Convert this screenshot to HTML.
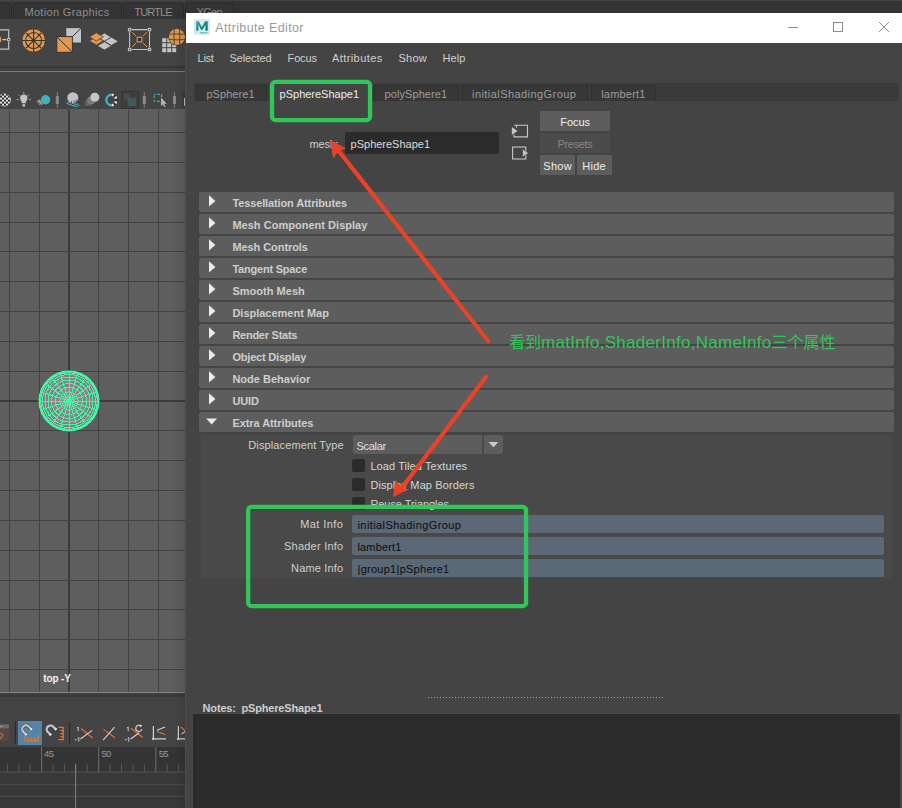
<!DOCTYPE html>
<html lang="zh"><head><meta charset="utf-8"><title>Attribute Editor</title>
<style>
html,body{margin:0;padding:0}
body{width:902px;height:808px;overflow:hidden;background:#444444;position:relative;font-family:"Liberation Sans", "Noto Sans CJK SC", sans-serif;}
.abs,.t,.box{position:absolute}
.t{white-space:pre;line-height:20px;height:20px;display:block}
svg{position:absolute;left:0;top:0;overflow:visible}
#maya{left:0;top:0;width:186px;height:808px;overflow:hidden;background:#444444}
#ae{left:186px;top:13px;width:716px;height:795px;background:#444444;overflow:hidden}
.sec{position:absolute;left:13px;width:695px;height:20px;background:#5d5d5d;border-radius:2px}
.btn{position:absolute;background:#5d5d5d;border-radius:1px}
.fld{position:absolute;left:166px;width:532px;height:18px;background:#5b6876;border-radius:2px}
.chk{position:absolute;left:166px;width:13px;height:13px;background:#2b2b2b;border-radius:2px}
.tab{position:absolute;top:72px;height:16px;background:#373737;border:1px solid #303030;border-bottom:none;box-sizing:border-box;border-radius:2px 2px 0 0}
</style></head><body>

<div id="maya" class="abs">
<div class="box" style="left:0;top:0;width:186px;height:19px;background:#3a3a3a"></div>
<div class="box" style="left:0;top:0;width:186px;height:1px;background:#464646"></div>
<div class="box" style="left:-20px;top:3px;width:32px;height:16px;background:#343434;border:1px solid #2b2b2b;border-bottom:none;box-sizing:border-box;border-radius:3px 3px 0 0"></div>
<div class="box" style="left:13px;top:3px;width:108.6px;height:16px;background:#343434;border:1px solid #2b2b2b;border-bottom:none;box-sizing:border-box;border-radius:3px 3px 0 0"></div>
<div class="box" style="left:122.8px;top:3px;width:61.2px;height:16px;background:#343434;border:1px solid #2b2b2b;border-bottom:none;box-sizing:border-box;border-radius:3px 3px 0 0"></div>
<div class="box" style="left:185.4px;top:3px;width:54.599999999999994px;height:16px;background:#343434;border:1px solid #2b2b2b;border-bottom:none;box-sizing:border-box;border-radius:3px 3px 0 0"></div>
<div class="box" style="left:0;top:19px;width:186px;height:47px;background:#444444"></div>
<div class="box" style="left:0;top:66px;width:186px;height:2px;background:#373737"></div>
<div class="box" style="left:0;top:68px;width:186px;height:3px;background:#414141"></div>
<div class="box" style="left:0;top:71px;width:186px;height:1.1px;background:#7c7c7c"></div>
<div class="box" style="left:0;top:109.4px;width:185.3px;height:582.4px;background:#5e5e5e"></div>
<div class="box" style="left:0;top:691.8px;width:185.3px;height:1.7px;background:#808080"></div>
<div class="box" style="left:0;top:693.5px;width:185.3px;height:3px;background:#3b3b3b"></div>
<div class="box" style="left:0;top:746.8px;width:185.2px;height:25.7px;background:#343434"></div>
<div class="box" style="left:0;top:772.5px;width:185.2px;height:36px;background:#383838"></div>
<div class="box" style="left:18px;top:720.8px;width:24.1px;height:24.2px;background:#5285a6"></div>
<svg width="186" height="808" viewBox="0 0 186 808">
<rect x="-21" y="109.5" width="1" height="582.3" fill="#424242"/>
<rect x="9" y="109.5" width="1" height="582.3" fill="#424242"/>
<rect x="39" y="109.5" width="1" height="582.3" fill="#424242"/>
<rect x="68" y="109.5" width="2" height="582.3" fill="#3c3c3c"/>
<rect x="98" y="109.5" width="1" height="582.3" fill="#424242"/>
<rect x="128" y="109.5" width="1" height="582.3" fill="#424242"/>
<rect x="158" y="109.5" width="1" height="582.3" fill="#424242"/>
<rect x="0" y="132" width="185.3" height="1" fill="#424242"/>
<rect x="0" y="162" width="185.3" height="1" fill="#424242"/>
<rect x="0" y="192" width="185.3" height="1" fill="#424242"/>
<rect x="0" y="222" width="185.3" height="1" fill="#424242"/>
<rect x="0" y="251" width="185.3" height="1" fill="#424242"/>
<rect x="0" y="281" width="185.3" height="1" fill="#424242"/>
<rect x="0" y="311" width="185.3" height="1" fill="#424242"/>
<rect x="0" y="341" width="185.3" height="1" fill="#424242"/>
<rect x="0" y="371" width="185.3" height="1" fill="#424242"/>
<rect x="0" y="400" width="185.3" height="2" fill="#3c3c3c"/>
<rect x="0" y="430" width="185.3" height="1" fill="#424242"/>
<rect x="0" y="460" width="185.3" height="1" fill="#424242"/>
<rect x="0" y="490" width="185.3" height="1" fill="#424242"/>
<rect x="0" y="520" width="185.3" height="1" fill="#424242"/>
<rect x="0" y="550" width="185.3" height="1" fill="#424242"/>
<rect x="0" y="580" width="185.3" height="1" fill="#424242"/>
<rect x="0" y="609" width="185.3" height="1" fill="#424242"/>
<rect x="0" y="639" width="185.3" height="1" fill="#424242"/>
<rect x="0" y="669" width="185.3" height="1" fill="#424242"/>
<defs><radialGradient id="sg" cx="50%" cy="50%" r="50%"><stop offset="0" stop-color="#9a8b93"/><stop offset="1" stop-color="#807c80"/></radialGradient></defs>
<circle cx="69.0" cy="401.0" r="29.7" fill="url(#sg)"/>
<g stroke="#46f5a3" fill="none" stroke-width="1" shape-rendering="crispEdges">
<circle cx="69.0" cy="401.0" r="4.65"/>
<circle cx="69.0" cy="401.0" r="9.18"/>
<circle cx="69.0" cy="401.0" r="13.48"/>
<circle cx="69.0" cy="401.0" r="17.46"/>
<circle cx="69.0" cy="401.0" r="21.00"/>
<circle cx="69.0" cy="401.0" r="24.03"/>
<circle cx="69.0" cy="401.0" r="26.46"/>
<circle cx="69.0" cy="401.0" r="28.25"/>
<circle cx="69.0" cy="401.0" r="29.33"/>
<circle cx="69.0" cy="401.0" r="29.70"/>
<line x1="39.30" y1="401.00" x2="98.70" y2="401.00"/>
<line x1="40.75" y1="391.82" x2="97.25" y2="410.18"/>
<line x1="44.97" y1="383.54" x2="93.03" y2="418.46"/>
<line x1="51.54" y1="376.97" x2="86.46" y2="425.03"/>
<line x1="59.82" y1="372.75" x2="78.18" y2="429.25"/>
<line x1="69.00" y1="371.30" x2="69.00" y2="430.70"/>
<line x1="78.18" y1="372.75" x2="59.82" y2="429.25"/>
<line x1="86.46" y1="376.97" x2="51.54" y2="425.03"/>
<line x1="93.03" y1="383.54" x2="44.97" y2="418.46"/>
<line x1="97.25" y1="391.82" x2="40.75" y2="410.18"/>
</g>
<circle cx="69.0" cy="401.0" r="29.7" fill="none" stroke="#46f5a3" stroke-width="1.6"/>
<circle cx="69.0" cy="401.0" r="2.4" fill="#46f5a3"/>
<g fill="none" stroke="#c4c4c4" stroke-width="1.2"><path d="M0 29.9H8.7V38M8.7 41.5V49.1H0"/><path d="M2.2 39.6H6.4"/></g>
<rect x="7" y="38" width="3.2" height="3.2" fill="#c4c4c4"/><rect x="8" y="39" width="1.2" height="1.2" fill="#333333"/>
<rect x="-1" y="37" width="2" height="5" fill="#e3974f"/>
<circle cx="33.6" cy="40.5" r="11.7" fill="#e3974f" stroke="#333333" stroke-width="0.8"/>
<g stroke="#333333" stroke-width="1.1" fill="none"><circle cx="33.6" cy="40.5" r="8"/>
<path d="M33.6 28.8V52.2M21.900000000000002 40.5H45.3"/>
<path d="M26.0 32.9L41.2 48.1M41.2 32.9L26.0 48.1"/></g>
<circle cx="33.6" cy="40.5" r="1.6" fill="#333333"/>
<circle cx="27.900000000000002" cy="34.8" r="1" fill="#333333"/>
<circle cx="27.900000000000002" cy="46.2" r="1" fill="#333333"/>
<circle cx="39.300000000000004" cy="34.8" r="1" fill="#333333"/>
<circle cx="39.300000000000004" cy="46.2" r="1" fill="#333333"/>
<rect x="65.8" y="27.7" width="15.6" height="15.3" fill="#c4c4c4" stroke="#333333" stroke-width="0.8"/>
<path d="M81 28.2L66 43" stroke="#333333" stroke-width="1"/>
<rect x="56.8" y="36.6" width="15.6" height="15.7" fill="#e3974f" stroke="#333333" stroke-width="1"/>
<path d="M57 37L72.2 52" stroke="#333333" stroke-width="1"/>
<polygon points="97.4,37.199999999999996 104.4,33.099999999999994 111.4,37.199999999999996 104.4,41.3" fill="#c4c4c4" stroke="#3d3d3d" stroke-width="0.7"/>
<polygon points="104.4,41.3 111.4,37.199999999999996 118.4,41.3 111.4,45.4" fill="#c4c4c4" stroke="#3d3d3d" stroke-width="0.7"/>
<polygon points="97.4,45.9 104.4,41.8 111.4,45.9 104.4,50.0" fill="#c4c4c4" stroke="#3d3d3d" stroke-width="0.7"/>
<polygon points="89.4,40.9 96.4,36.8 103.4,40.9 96.4,45.0" fill="#e3974f" stroke="#3d3d3d" stroke-width="0.7"/>
<polygon points="89.4,36.9 96.4,32.8 103.4,36.9 96.4,41.0" fill="#e3974f" stroke="#3d3d3d" stroke-width="0.7"/>
<g stroke="#c4c4c4" stroke-width="1.1" fill="none"><path d="M131.6 29.6H147.5M131.6 49.5H147.5M129.6 31.6V47.5M149.5 31.6V47.5"/></g>
<rect x="127.89999999999999" y="27.900000000000002" width="3.4" height="3.4" fill="#c4c4c4"/><rect x="129.0" y="29.0" width="1.2" height="1.2" fill="#333333"/>
<rect x="127.89999999999999" y="47.8" width="3.4" height="3.4" fill="#c4c4c4"/><rect x="129.0" y="48.9" width="1.2" height="1.2" fill="#333333"/>
<rect x="147.8" y="27.900000000000002" width="3.4" height="3.4" fill="#c4c4c4"/><rect x="148.9" y="29.0" width="1.2" height="1.2" fill="#333333"/>
<rect x="147.8" y="47.8" width="3.4" height="3.4" fill="#c4c4c4"/><rect x="148.9" y="48.9" width="1.2" height="1.2" fill="#333333"/>
<rect x="137.2" y="37.2" width="4.7" height="4.7" fill="#30363a" stroke="#e3974f" stroke-width="1.1"/>
<g stroke="#e3974f" stroke-width="1"><path d="M132.2 32.2L136 36M146.9 32.2L143.1 36M132.2 46.9L136 43.1M146.9 46.9L143.1 43.1"/></g>
<rect x="162.2" y="38.2" width="4" height="4" fill="#c4c4c4"/>
<rect x="162.2" y="43.2" width="4" height="4" fill="#c4c4c4"/>
<rect x="162.2" y="48.2" width="4" height="4" fill="#c4c4c4"/>
<rect x="167.2" y="38.2" width="4" height="4" fill="#c4c4c4"/>
<rect x="167.2" y="43.2" width="4" height="4" fill="#c4c4c4"/>
<rect x="167.2" y="48.2" width="4" height="4" fill="#c4c4c4"/>
<rect x="172.2" y="38.2" width="4" height="4" fill="#c4c4c4"/>
<rect x="172.2" y="43.2" width="4" height="4" fill="#c4c4c4"/>
<rect x="172.2" y="48.2" width="4" height="4" fill="#c4c4c4"/>
<circle cx="176.9" cy="36.9" r="8.7" fill="#3c3c3c"/>
<circle cx="176.9" cy="36.9" r="8.1" fill="#e3974f"/>
<g stroke="#333333" stroke-width="0.9" fill="none" opacity="0.85"><path d="M174.3 28.799999999999997Q173.6 36.9 174.3 45.0M179.5 28.799999999999997Q180.20000000000002 36.9 179.5 45.0M168.8 34.3Q176.9 33.6 185.0 34.3M168.8 39.5Q176.9 40.199999999999996 185.0 39.5"/></g>
<clipPath id="ck"><circle cx="4.4" cy="100" r="6.4"/></clipPath>
<g clip-path="url(#ck)"><rect x="-3" y="92" width="15" height="16" fill="#e8e8e8"/>
<rect x="-6.0" y="93.6" width="2" height="2" fill="#2a2a2a"/>
<rect x="-6.0" y="97.6" width="2" height="2" fill="#2a2a2a"/>
<rect x="-6.0" y="101.6" width="2" height="2" fill="#2a2a2a"/>
<rect x="-6.0" y="105.6" width="2" height="2" fill="#2a2a2a"/>
<rect x="-4.0" y="95.6" width="2" height="2" fill="#2a2a2a"/>
<rect x="-4.0" y="99.6" width="2" height="2" fill="#2a2a2a"/>
<rect x="-4.0" y="103.6" width="2" height="2" fill="#2a2a2a"/>
<rect x="-4.0" y="107.6" width="2" height="2" fill="#2a2a2a"/>
<rect x="-2.0" y="93.6" width="2" height="2" fill="#2a2a2a"/>
<rect x="-2.0" y="97.6" width="2" height="2" fill="#2a2a2a"/>
<rect x="-2.0" y="101.6" width="2" height="2" fill="#2a2a2a"/>
<rect x="-2.0" y="105.6" width="2" height="2" fill="#2a2a2a"/>
<rect x="0.0" y="95.6" width="2" height="2" fill="#2a2a2a"/>
<rect x="0.0" y="99.6" width="2" height="2" fill="#2a2a2a"/>
<rect x="0.0" y="103.6" width="2" height="2" fill="#2a2a2a"/>
<rect x="0.0" y="107.6" width="2" height="2" fill="#2a2a2a"/>
<rect x="2.0" y="93.6" width="2" height="2" fill="#2a2a2a"/>
<rect x="2.0" y="97.6" width="2" height="2" fill="#2a2a2a"/>
<rect x="2.0" y="101.6" width="2" height="2" fill="#2a2a2a"/>
<rect x="2.0" y="105.6" width="2" height="2" fill="#2a2a2a"/>
<rect x="4.0" y="95.6" width="2" height="2" fill="#2a2a2a"/>
<rect x="4.0" y="99.6" width="2" height="2" fill="#2a2a2a"/>
<rect x="4.0" y="103.6" width="2" height="2" fill="#2a2a2a"/>
<rect x="4.0" y="107.6" width="2" height="2" fill="#2a2a2a"/>
<rect x="6.0" y="93.6" width="2" height="2" fill="#2a2a2a"/>
<rect x="6.0" y="97.6" width="2" height="2" fill="#2a2a2a"/>
<rect x="6.0" y="101.6" width="2" height="2" fill="#2a2a2a"/>
<rect x="6.0" y="105.6" width="2" height="2" fill="#2a2a2a"/>
<rect x="8.0" y="95.6" width="2" height="2" fill="#2a2a2a"/>
<rect x="8.0" y="99.6" width="2" height="2" fill="#2a2a2a"/>
<rect x="8.0" y="103.6" width="2" height="2" fill="#2a2a2a"/>
<rect x="8.0" y="107.6" width="2" height="2" fill="#2a2a2a"/>
</g>
<path d="M23.8 94.6a3.7 3.7 0 0 1 3.7 3.7c0 1.8-1.6 2.7-1.9 5h-3.6c-.3-2.3-1.9-3.2-1.9-5a3.7 3.7 0 0 1 3.7-3.7z" fill="#c4c4c4"/>
<rect x="22.5" y="104.2" width="2.6" height="2.4" fill="#c4c4c4"/>
<g stroke="#c4c4c4" stroke-width="1"><path d="M23.8 92.2v1.3M18.6 94.6l1 1M29.0 94.6l-1 1M16.8 99.4h1.6M29.200000000000003 99.4h1.6"/></g>
<path d="M36.5 101.2l3-2 3.5 5-3 1.2z" fill="#9a9a9a"/><path d="M37.6 101.8l3.4 3.2" stroke="#444" stroke-width="0.7"/>
<circle cx="45.5" cy="99.7" r="4.7" fill="#40b0c2"/>
<rect x="56.8" y="92" width="1" height="15.8" fill="#7d7d7d"/><rect x="55.8" y="96" width="3" height="8" fill="#8a8a8a"/>
<rect x="143.8" y="92" width="1" height="15.8" fill="#7d7d7d"/><rect x="142.8" y="96" width="3" height="8" fill="#8a8a8a"/>
<rect x="174.0" y="92" width="1" height="15.8" fill="#7d7d7d"/><rect x="173.0" y="96" width="3" height="8" fill="#8a8a8a"/>
<g stroke="#40b0c2" stroke-width="0.9"><path d="M66.5 103.4l9.5 3.4M70.5 102.2l8.5 3.2M66.5 103.4l5-1.8M69.5 104.6l5-2M72.8 105.8l5-2M76 106.8l3.5-1.6"/></g>
<circle cx="72.8" cy="97.7" r="5.5" fill="#c2c2c2"/>
<g stroke="#444" stroke-width="0.8"><path d="M71.5 101v3M74 100.5v3M76.3 99.5v3"/></g>
<circle cx="88.3" cy="103" r="3.6" fill="#5e5e5e"/><circle cx="91" cy="100.5" r="4" fill="#7a7a7a"/><circle cx="94.8" cy="97.2" r="4.5" fill="#c6c6c6"/>
<path d="M111.6 94.7A5.3 5.3 0 0 0 111.6 105.3" fill="none" stroke="#40b0c2" stroke-width="2.3"/>
<rect x="111.61" y="93.82" width="2.4" height="2.4" fill="#e6e6e6"/>
<rect x="114.48" y="96.31" width="2.4" height="2.4" fill="#e6e6e6"/>
<rect x="114.48" y="101.29" width="2.4" height="2.4" fill="#e6e6e6"/>
<rect x="111.61" y="103.78" width="2.4" height="2.4" fill="#e6e6e6"/>
<rect x="113.54" y="94.92" width="2" height="2" fill="#2c2c2c"/>
<rect x="115.40" y="99.00" width="2" height="2" fill="#2c2c2c"/>
<rect x="113.54" y="103.08" width="2" height="2" fill="#2c2c2c"/>
<rect x="121.5" y="91.2" width="17.2" height="17.3" fill="#3e3e3e" stroke="#323232" stroke-width="0.8"/>
<rect x="124" y="94" width="5.6" height="5.6" fill="#3e4f53"/><rect x="127.8" y="97.8" width="8.4" height="8.4" fill="#42575b"/>
<rect x="154.2" y="94.4" width="7.4" height="7" fill="none" stroke="#40b0c2" stroke-width="1.2" stroke-dasharray="2.6 1.8" stroke-dashoffset="1.3"/>
<path d="M161 97.6v8.4l2-1.8 1.4 3 1.2-.6-1.4-2.9h2.6z" fill="#b4b4b4"/>
<rect x="182.4" y="92" width="3" height="16" fill="#3a3a3a"/><rect x="184" y="98" width="1.6" height="8" fill="#bdbdbd"/>
<rect x="0" y="724.4" width="8.9" height="4.2" fill="#6c6c6c"/><rect x="0" y="728.6" width="8.9" height="12.4" fill="#5e463c"/>
<path d="M0 733l3 2-3 4" stroke="#777" stroke-width="1.4" fill="none"/>
<rect x="0" y="726" width="2" height="1.2" fill="#999"/>
<rect x="14.8" y="721.6" width="1.2" height="23" fill="#2c2c2c"/>
<rect x="69.0" y="721.6" width="1.2" height="23" fill="#2c2c2c"/>
<g transform="translate(26.0,729.2) rotate(-45)"><path d="M-3.8 4.4V0A3.8 3.8 0 0 1 3.8 0V4.4" fill="none" stroke="#3a4a55" stroke-width="3.4"/><path d="M-3.8 4.4V0A3.8 3.8 0 0 1 3.8 0V4.4" fill="none" stroke="#c4c4c4" stroke-width="2.2"/><path d="M-3.8 4.4V3M3.8 4.4V3" stroke="#f4f4f4" stroke-width="2.2"/></g>
<g stroke="#e8722f" stroke-width="1.3" fill="none"><path d="M25 735.6v5.2h13.2v-5.2M28.4 737.6v3M31.6 737.6v3M34.8 737.6v3"/></g>
<g transform="translate(50.5,729.3) rotate(-45)"><path d="M-3.8 4.4V0A3.8 3.8 0 0 1 3.8 0V4.4" fill="none" stroke="#3a4a55" stroke-width="3.4"/><path d="M-3.8 4.4V0A3.8 3.8 0 0 1 3.8 0V4.4" fill="none" stroke="#c4c4c4" stroke-width="2.2"/><path d="M-3.8 4.4V3M3.8 4.4V3" stroke="#f4f4f4" stroke-width="2.2"/></g>
<g stroke="#e8722f" stroke-width="1.3" fill="none"><path d="M58.4 727.4h4.8v12.2h-4.8M60.4 730.6h2.8M60.4 733.6h2.8M60.4 736.6h2.8"/></g>
<path d="M77 728l1.2-1v4.2" stroke="#d2d2d2" stroke-width="0.9" fill="none"/>
<path d="M77.6 738.6l1.2-1v4.2" stroke="#d2d2d2" stroke-width="0.9" fill="none"/>
<path d="M74.8 739.8h1.8" stroke="#d2d2d2" stroke-width="0.9"/>
<path d="M81 728.5L92.6 738" stroke="#e8722f" stroke-width="1.1"/><path d="M80.4 739L92.2 730.4" stroke="#d2d2d2" stroke-width="1.1"/>
<path d="M103.5 729.4L115 737.7" stroke="#e8722f" stroke-width="1.1"/><path d="M103.1 740.2L114.6 727.2" stroke="#d2d2d2" stroke-width="1.1"/>
<path d="M127 728l1.2-1v4.2" stroke="#d2d2d2" stroke-width="0.9" fill="none"/>
<path d="M127.6 738.6l1.2-1v4.2" stroke="#d2d2d2" stroke-width="0.9" fill="none"/>
<path d="M124.8 739.8h1.8" stroke="#d2d2d2" stroke-width="0.9"/>
<path d="M131 728.3L142.7 737.5" stroke="#e8722f" stroke-width="1.1"/><path d="M130.5 739L139.3 732.7" stroke="#d2d2d2" stroke-width="1.1"/>
<path d="M141.9 729a3.1 3.1 0 1 1 -1.4 -3.3" fill="none" stroke="#d2d2d2" stroke-width="1.1"/><path d="M139.6 724.2l2.8 1.4-2.4 1.8z" fill="#d2d2d2"/><path d="M135.6 729.2a3.1 3.1 0 0 0 2 2.2" fill="none" stroke="#d2d2d2" stroke-width="1.1"/>
<path d="M153.4 726V739.4M152 738.9H166" stroke="#d2d2d2" stroke-width="1.2" fill="none"/><path d="M151.6 738.9l2-1.6v3.2z" fill="#d2d2d2"/>
<path d="M157 730.2L165 727" stroke="#d2d2d2" stroke-width="1.1"/><path d="M157 731.6L165 734.6" stroke="#e8722f" stroke-width="1.1"/>
<path d="M178.4 726V739.4M177 738.9H186" stroke="#d2d2d2" stroke-width="1.2" fill="none"/><path d="M176.6 738.9l2-1.6v3.2z" fill="#d2d2d2"/>
<path d="M181 727L185.4 731" stroke="#e8722f" stroke-width="1.1"/><path d="M181.6 734L185.4 731.4" stroke="#d2d2d2" stroke-width="1.1"/>
<rect x="-4.58" y="764.3" width="1" height="8.2" fill="#5a5a5a"/>
<rect x="6.84" y="764.3" width="1" height="8.2" fill="#5a5a5a"/>
<rect x="18.26" y="764.3" width="1" height="8.2" fill="#5a5a5a"/>
<rect x="29.68" y="764.3" width="1" height="8.2" fill="#5a5a5a"/>
<rect x="41.10" y="747" width="1" height="25.5" fill="#6f6f6f"/>
<rect x="52.52" y="764.3" width="1" height="8.2" fill="#5a5a5a"/>
<rect x="63.94" y="764.3" width="1" height="8.2" fill="#5a5a5a"/>
<rect x="75.36" y="764.3" width="1" height="8.2" fill="#5a5a5a"/>
<rect x="86.78" y="764.3" width="1" height="8.2" fill="#5a5a5a"/>
<rect x="98.20" y="747" width="1" height="25.5" fill="#6f6f6f"/>
<rect x="109.62" y="764.3" width="1" height="8.2" fill="#5a5a5a"/>
<rect x="121.04" y="764.3" width="1" height="8.2" fill="#5a5a5a"/>
<rect x="132.46" y="764.3" width="1" height="8.2" fill="#5a5a5a"/>
<rect x="143.88" y="764.3" width="1" height="8.2" fill="#5a5a5a"/>
<rect x="155.30" y="747" width="1" height="25.5" fill="#6f6f6f"/>
<rect x="166.72" y="764.3" width="1" height="8.2" fill="#5a5a5a"/>
<rect x="178.14" y="764.3" width="1" height="8.2" fill="#5a5a5a"/>
<rect x="0" y="771.4" width="185.2" height="1.2" fill="#4c4c4c"/>
<rect x="0" y="784.1" width="185.2" height="1.2" fill="#4c4c4c"/>
<rect x="0" y="795.7" width="185.2" height="1.2" fill="#4c4c4c"/>
<rect x="75.1" y="764" width="1" height="44" fill="#808080"/>
</svg>
<span class="t" style="left:24.40px;top:2.19px;font-size:11px;font-weight:400;color:#8e8e8e;letter-spacing:0.334px;">Motion Graphics</span>
<span class="t" style="left:134.30px;top:2.19px;font-size:11px;font-weight:400;color:#8e8e8e;letter-spacing:-0.849px;">TURTLE</span>
<span class="t" style="left:196.50px;top:2.19px;font-size:11px;font-weight:400;color:#8e8e8e;letter-spacing:-0.660px;">XGen</span>
<span class="t" style="left:43.30px;top:668.53px;font-size:10px;font-weight:700;color:#f2f2f2;letter-spacing:-0.138px;">top -Y</span>
<span class="t" style="left:44.10px;top:743.51px;font-size:9.5px;font-weight:400;color:#969696;letter-spacing:-0.639px;">45</span>
<span class="t" style="left:101.60px;top:743.51px;font-size:9.5px;font-weight:400;color:#969696;letter-spacing:-0.839px;">50</span>
<span class="t" style="left:158.80px;top:743.51px;font-size:9.5px;font-weight:400;color:#969696;letter-spacing:-0.839px;">55</span>
<div class="box" style="left:172px;top:10px;width:14px;height:798px;background:linear-gradient(to right,rgba(0,0,0,0),rgba(0,0,0,0.10))"></div>
</div>
<div class="box" style="left:185px;top:43px;width:1px;height:765px;background:#4c4c4c"></div>
<div class="box" style="left:186px;top:0;width:716px;height:13px;background:#333333"></div>
<div class="box" style="left:186px;top:0;width:716px;height:1px;background:#404040"></div>
<div class="box" style="left:185.4px;top:3px;width:48.2px;height:10px;background:#333333;border:1px solid #2b2b2b;border-bottom:none;box-sizing:border-box;border-radius:3px 3px 0 0"></div>
<div class="box" style="left:186px;top:0;width:100px;height:13px;overflow:hidden"><span class="t" style="left:10.50px;top:2.19px;font-size:11px;font-weight:400;color:#8e8e8e;letter-spacing:-0.660px;">XGen</span></div>
<div id="ae" class="abs">
<div class="box" style="left:0;top:0;width:716px;height:30px;background:#ffffff"></div>
<div class="box" style="left:8px;top:70px;width:705px;height:18px;background:#3a3a3a"></div>
<div class="tab" style="left:10.400000000000006px;width:70.20000000000002px"></div>
<div class="tab" style="left:187.39999999999998px;width:85.90000000000003px"></div>
<div class="tab" style="left:276.2px;width:125.59999999999997px"></div>
<div class="tab" style="left:404.6px;width:65.60000000000002px"></div>
<div class="box" style="left:82.60000000000002px;top:69px;width:103.39999999999998px;height:19.2px;background:#444444"></div>
<div class="box" style="left:159px;top:119.30000000000001px;width:153.60000000000002px;height:21.4px;background:#2b2b2b;border-radius:2px"></div>
<div class="btn" style="left:354px;top:98px;width:70px;height:20px"></div>
<div class="btn" style="left:354px;top:120.19999999999999px;width:70px;height:19.8px;background:#4b4b4b"></div>
<div class="btn" style="left:354px;top:142px;width:35px;height:20px"></div>
<div class="btn" style="left:391px;top:142px;width:35px;height:20px"></div>
<div class="sec" style="top:179px"></div>
<div class="sec" style="top:201px"></div>
<div class="sec" style="top:223px"></div>
<div class="sec" style="top:245px"></div>
<div class="sec" style="top:267px"></div>
<div class="sec" style="top:289px"></div>
<div class="sec" style="top:311px"></div>
<div class="sec" style="top:333px"></div>
<div class="sec" style="top:355px"></div>
<div class="sec" style="top:377px"></div>
<div class="sec" style="top:399px"></div>
<div class="box" style="left:15px;top:421.6px;width:691px;height:143.39999999999998px;background:#494949"></div>
<div class="box" style="left:167px;top:422px;width:129.2px;height:19px;background:#5d5d5d;border-radius:2px 0 0 2px"></div>
<div class="box" style="left:298px;top:422px;width:18.69999999999999px;height:19px;background:#5d5d5d;border-radius:0 2px 2px 0"></div>
<div class="chk" style="left:166.2px;top:446.3px;height:13px"></div>
<div class="chk" style="left:166.2px;top:465.2px;height:13px"></div>
<div class="chk" style="left:166.2px;top:484.0px;height:13px"></div>
<div class="fld" style="left:166px;top:502.20000000000005px;width:532px"></div>
<div class="fld" style="left:166px;top:524.2px;width:532px"></div>
<div class="fld" style="left:166px;top:546.0px;width:532px"></div>
<div class="box" style="left:7px;top:701px;width:707px;height:95px;background:#2b2b2b;box-shadow:0 0 0 0.6px #494949"></div>
<div class="box" style="left:242px;top:684px;width:235px;height:1px;background:repeating-linear-gradient(to right,#a2a2a2 0,#a2a2a2 1px,transparent 1px,transparent 3px)"></div>
<span class="t" style="left:29.30px;top:5.17px;font-size:12.5px;font-weight:400;color:#999999;letter-spacing:0.370px;">Attribute Editor</span>
<span class="t" style="left:11.60px;top:34.99px;font-size:11px;font-weight:400;color:#cfcfcf;letter-spacing:-0.281px;">List</span>
<span class="t" style="left:43.40px;top:34.99px;font-size:11px;font-weight:400;color:#cfcfcf;letter-spacing:-0.077px;">Selected</span>
<span class="t" style="left:101.60px;top:34.99px;font-size:11px;font-weight:400;color:#cfcfcf;letter-spacing:-0.154px;">Focus</span>
<span class="t" style="left:146.00px;top:34.99px;font-size:11px;font-weight:400;color:#cfcfcf;letter-spacing:0.413px;">Attributes</span>
<span class="t" style="left:212.40px;top:34.99px;font-size:11px;font-weight:400;color:#cfcfcf;letter-spacing:0.267px;">Show</span>
<span class="t" style="left:256.40px;top:34.99px;font-size:11px;font-weight:400;color:#cfcfcf;letter-spacing:0.094px;">Help</span>
<span class="t" style="left:20.40px;top:71.49px;font-size:11px;font-weight:400;color:#9c9c9c;letter-spacing:0.073px;">pSphere1</span>
<span class="t" style="left:93.60px;top:71.49px;font-size:11px;font-weight:400;color:#ededed;letter-spacing:-0.009px;">pSphereShape1</span>
<span class="t" style="left:198.50px;top:71.49px;font-size:11px;font-weight:400;color:#9c9c9c;letter-spacing:0.084px;">polySphere1</span>
<span class="t" style="left:286.00px;top:71.49px;font-size:11px;font-weight:400;color:#9c9c9c;letter-spacing:0.441px;">initialShadingGroup</span>
<span class="t" style="left:415.20px;top:71.49px;font-size:11px;font-weight:400;color:#9c9c9c;letter-spacing:0.200px;">lambert1</span>
<span class="t" style="left:123.50px;top:121.39px;font-size:11px;font-weight:400;color:#cfcfcf;letter-spacing:-0.194px;">mesh:</span>
<span class="t" style="left:164.60px;top:121.39px;font-size:11px;font-weight:400;color:#dcdcdc;letter-spacing:-0.009px;">pSphereShape1</span>
<span class="t" style="left:374.30px;top:98.69px;font-size:11px;font-weight:400;color:#eeeeee;letter-spacing:-0.054px;">Focus</span>
<span class="t" style="left:371.50px;top:120.79px;font-size:11px;font-weight:400;color:#858585;letter-spacing:-0.328px;">Presets</span>
<span class="t" style="left:357.30px;top:142.79px;font-size:11px;font-weight:400;color:#eeeeee;letter-spacing:0.292px;">Show</span>
<span class="t" style="left:396.30px;top:142.79px;font-size:11px;font-weight:400;color:#eeeeee;letter-spacing:0.269px;">Hide</span>
<span class="t" style="left:46.40px;top:179.79px;font-size:11px;font-weight:700;color:#cdcdcd;letter-spacing:-0.120px;">Tessellation Attributes</span>
<span class="t" style="left:46.40px;top:201.79px;font-size:11px;font-weight:700;color:#cdcdcd;letter-spacing:0.024px;">Mesh Component Display</span>
<span class="t" style="left:46.40px;top:223.79px;font-size:11px;font-weight:700;color:#cdcdcd;letter-spacing:-0.070px;">Mesh Controls</span>
<span class="t" style="left:46.40px;top:245.79px;font-size:11px;font-weight:700;color:#cdcdcd;letter-spacing:-0.211px;">Tangent Space</span>
<span class="t" style="left:46.40px;top:267.79px;font-size:11px;font-weight:700;color:#cdcdcd;letter-spacing:0.034px;">Smooth Mesh</span>
<span class="t" style="left:46.40px;top:289.79px;font-size:11px;font-weight:700;color:#cdcdcd;letter-spacing:-0.006px;">Displacement Map</span>
<span class="t" style="left:46.40px;top:311.79px;font-size:11px;font-weight:700;color:#cdcdcd;letter-spacing:-0.255px;">Render Stats</span>
<span class="t" style="left:46.40px;top:333.79px;font-size:11px;font-weight:700;color:#cdcdcd;letter-spacing:-0.194px;">Object Display</span>
<span class="t" style="left:46.40px;top:355.79px;font-size:11px;font-weight:700;color:#cdcdcd;letter-spacing:0.012px;">Node Behavior</span>
<span class="t" style="left:46.40px;top:377.79px;font-size:11px;font-weight:700;color:#cdcdcd;letter-spacing:-0.098px;">UUID</span>
<span class="t" style="left:46.40px;top:399.79px;font-size:11px;font-weight:700;color:#cdcdcd;letter-spacing:-0.069px;">Extra Attributes</span>
<span class="t" style="left:62.30px;top:422.19px;font-size:11px;font-weight:400;color:#cfcfcf;letter-spacing:0.120px;">Displacement Type</span>
<span class="t" style="left:170.50px;top:422.99px;font-size:11px;font-weight:400;color:#e0e0e0;letter-spacing:-0.281px;">Scalar</span>
<span class="t" style="left:184.40px;top:442.79px;font-size:11px;font-weight:400;color:#d6d6d6;letter-spacing:0.084px;">Load Tiled Textures</span>
<span class="t" style="left:184.40px;top:461.79px;font-size:11px;font-weight:400;color:#d6d6d6;letter-spacing:0.106px;">Display Map Borders</span>
<div class="box" style="left:0;top:0;width:716px;height:497.6px;overflow:hidden"><span class="t" style="left:184.40px;top:480.79px;font-size:11px;font-weight:400;color:#d6d6d6;letter-spacing:-0.060px;">Reuse Triangles</span></div>
<span class="t" style="left:114.20px;top:500.99px;font-size:11px;font-weight:400;color:#cfcfcf;letter-spacing:0.431px;">Mat Info</span>
<span class="t" style="left:98.00px;top:522.99px;font-size:11px;font-weight:400;color:#cfcfcf;letter-spacing:0.230px;">Shader Info</span>
<span class="t" style="left:105.00px;top:544.99px;font-size:11px;font-weight:400;color:#cfcfcf;letter-spacing:0.183px;">Name Info</span>
<span class="t" style="left:171.50px;top:501.99px;font-size:11px;font-weight:400;color:#0c0c0c;letter-spacing:0.415px;">initialShadingGroup</span>
<span class="t" style="left:171.50px;top:523.99px;font-size:11px;font-weight:400;color:#0c0c0c;letter-spacing:0.150px;">lambert1</span>
<span class="t" style="left:171.50px;top:545.99px;font-size:11px;font-weight:400;color:#0c0c0c;letter-spacing:0.270px;">|group1|pSphere1</span>
<span class="t" style="left:16.60px;top:684.99px;font-size:11px;font-weight:700;color:#cdcdcd;letter-spacing:-0.175px;">Notes:  pSphereShape1</span>
<svg width="716" height="795" viewBox="186 13 716 795">
<defs><linearGradient id="mg" x1="0" y1="0" x2="1" y2="1"><stop offset="0" stop-color="#3aa6a8"/><stop offset="0.5" stop-color="#12888c"/><stop offset="1" stop-color="#0e6f78"/></linearGradient></defs>
<rect x="194" y="19" width="16" height="15.8" fill="#d6ecec"/>
<path d="M196.2 30.8V21.2h2.6l3.1 6 3.1-6h2.7v9.6h-2.3v-6.2l-2.7 5.2h-1.7l-2.6-5.2v6.2z" fill="url(#mg)"/>
<rect x="200.2" y="32" width="7.2" height="1.5" fill="#5bb5b7" opacity="0.8"/>
<path d="M788 27.5h10" stroke="#8a8a8a" stroke-width="1"/>
<rect x="833.5" y="22.5" width="9" height="9" fill="none" stroke="#8a8a8a" stroke-width="1"/>
<path d="M879 22l10 10M889 22l-10 10" stroke="#8a8a8a" stroke-width="1"/>
<path d="M209 195.2l6.4 5.7-6.4 5.7z" fill="#ececec"/>
<path d="M209 217.2l6.4 5.7-6.4 5.7z" fill="#ececec"/>
<path d="M209 239.2l6.4 5.7-6.4 5.7z" fill="#ececec"/>
<path d="M209 261.2l6.4 5.7-6.4 5.7z" fill="#ececec"/>
<path d="M209 283.2l6.4 5.7-6.4 5.7z" fill="#ececec"/>
<path d="M209 305.2l6.4 5.7-6.4 5.7z" fill="#ececec"/>
<path d="M209 327.2l6.4 5.7-6.4 5.7z" fill="#ececec"/>
<path d="M209 349.2l6.4 5.7-6.4 5.7z" fill="#ececec"/>
<path d="M209 371.2l6.4 5.7-6.4 5.7z" fill="#ececec"/>
<path d="M209 393.2l6.4 5.7-6.4 5.7z" fill="#ececec"/>
<path d="M206.2 418.4h10.8l-5.4 6.2z" fill="#ececec"/>
<path d="M488.6 442h9.8l-4.9 5.3z" fill="#cccccc"/>
<path d="M516.5 125.3h11v11.6h-13.4v-2.4" fill="none" stroke="#c6c6c6" stroke-width="1.1"/><path d="M514.1 125.3h2.4v2.4" fill="none" stroke="#c6c6c6" stroke-width="1.1"/><path d="M511.8 127l5.8 4-5.8 4z" fill="#c6c6c6"/>
<rect x="512.6" y="147" width="13.2" height="12" fill="none" stroke="#c6c6c6" stroke-width="1.1"/><path d="M522.6 149l6 4-6 4z" fill="#c6c6c6" stroke="#444" stroke-width="0.6"/>
</svg>
</div>
<svg width="902" height="808" viewBox="0 0 902 808">
<rect x="272.05" y="81.95" width="98.0" height="38.1" rx="3.4" ry="3.4" fill="none" stroke="#30c659" stroke-width="4.3"/>
<rect x="248.15" y="506.8" width="277.9" height="99.3" rx="3.4" ry="3.4" fill="none" stroke="#30c659" stroke-width="4.3"/>
<line x1="488.3" y1="341.2" x2="338.5" y2="150.6" stroke="#ea4226" stroke-width="4.2" stroke-linecap="round"/>
<polygon points="330,140 346.2,148.4 338.6,151 333.2,158.4" fill="#ea4226"/>
<line x1="486" y1="376.8" x2="402.3" y2="487.3" stroke="#ea4226" stroke-width="4.2" stroke-linecap="round"/>
<polygon points="392.9,497 395.6,479.7 402.6,488.2 409.3,489.3" fill="#ea4226"/>
</svg>
<span class="t" style="left:509px;top:331px;font-size:16px;line-height:24px;height:24px;color:#30c659">看到<span id="lat" style="font-size:17px;letter-spacing:0.28px">matInfo,ShaderInfo,NameInfo</span>三个属性</span>
</body></html>
